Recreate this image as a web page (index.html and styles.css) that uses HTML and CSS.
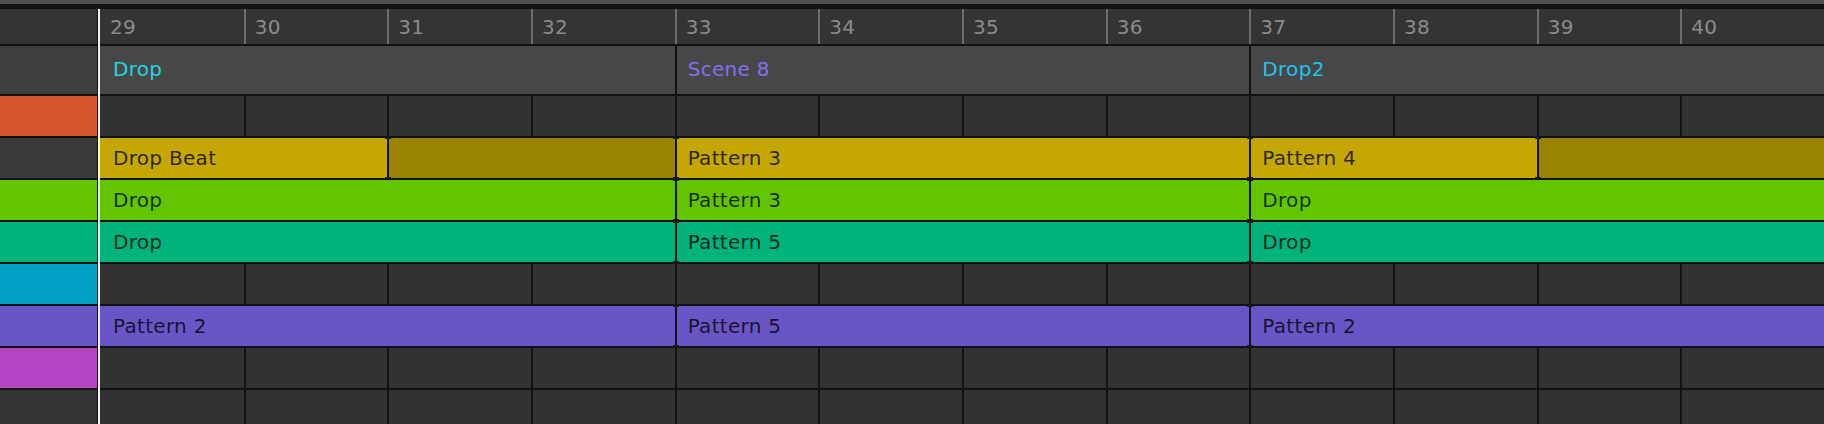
FILE: index.html
```html
<!DOCTYPE html>
<html lang="en">
<head>
    <meta charset="UTF-8">
    <title>Arranger</title>
    <link rel="stylesheet" href="styles.css">
</head>
<body>
    <div class="topbar"></div>
    <div class="arranger">
        <div class="heads">
            <div class="head ruler-head"></div>
            <div class="head scene-head"></div>
            <div class="head track orange"></div>
            <div class="head track gray"></div>
            <div class="head track green"></div>
            <div class="head track teal"></div>
            <div class="head track cyan"></div>
            <div class="head track purple"></div>
            <div class="head track magenta"></div>
            <div class="head track dark"></div>
        </div>

        <div class="lanes">
            <div class="ruler">
                <div class="tick">29</div>
                <div class="tick">30</div>
                <div class="tick">31</div>
                <div class="tick">32</div>
                <div class="tick">33</div>
                <div class="tick">34</div>
                <div class="tick">35</div>
                <div class="tick">36</div>
                <div class="tick">37</div>
                <div class="tick">38</div>
                <div class="tick">39</div>
                <div class="tick">40</div>
            </div>

            <div class="scenes">
                <div class="scene drop">Drop</div>
                <div class="scene scene8">Scene 8</div>
                <div class="scene drop2">Drop2</div>
            </div>

            <!-- track 1 -->
            <div class="lane empty">
                <div></div><div></div><div></div><div></div>
                <div></div><div></div><div></div><div></div>
                <div></div><div></div><div></div><div></div>
            </div>

            <!-- track 2 -->
            <div class="lane">
                <div class="clip yellow half">Drop Beat</div>
                <div class="clip yellow-loop half"></div>
                <div class="clip yellow">Pattern 3</div>
                <div class="clip yellow half">Pattern 4</div>
                <div class="clip yellow-loop half"></div>
            </div>

            <!-- track 3 -->
            <div class="lane">
                <div class="clip green">Drop</div>
                <div class="clip green">Pattern 3</div>
                <div class="clip green">Drop</div>
            </div>

            <!-- track 4 -->
            <div class="lane">
                <div class="clip teal">Drop</div>
                <div class="clip teal">Pattern 5</div>
                <div class="clip teal">Drop</div>
            </div>

            <!-- track 5 -->
            <div class="lane empty">
                <div></div><div></div><div></div><div></div>
                <div></div><div></div><div></div><div></div>
                <div></div><div></div><div></div><div></div>
            </div>

            <!-- track 6 -->
            <div class="lane">
                <div class="clip purple">Pattern 2</div>
                <div class="clip purple">Pattern 5</div>
                <div class="clip purple">Pattern 2</div>
            </div>

            <!-- track 7 -->
            <div class="lane empty">
                <div></div><div></div><div></div><div></div>
                <div></div><div></div><div></div><div></div>
                <div></div><div></div><div></div><div></div>
            </div>

            <!-- track 8 -->
            <div class="lane empty">
                <div></div><div></div><div></div><div></div>
                <div></div><div></div><div></div><div></div>
                <div></div><div></div><div></div><div></div>
            </div>
        </div>
    </div>
</body>
</html>
```

FILE: styles.css
```css
body {
    margin: 0;
    background: #121212;
    font-family: "DejaVu Sans", sans-serif;
    font-size: 20px;
    letter-spacing: 0.3px;
    height: 424px;
    overflow: hidden;
}

.topbar {
    height: 4px;
    background: #505050;
    margin-bottom: 5px;
}

.arranger {
    display: flex;
}

/* left track colour column */
.heads {
    width: 97px;
    padding-right: 1px;
    border-right: 2px solid #f2f2f2;
    display: flex;
    flex-direction: column;
    gap: 2px;
}

.head {
    height: 40px;
}

.ruler-head {
    height: 35px;
    background: #343434;
}

.scene-head {
    height: 48px;
    background: #3e3e3e;
}

.orange  { background: #d3552c; }
.gray    { background: #3a3a3a; }
.green   { background: #63c400; }
.teal    { background: #00b27b; }
.cyan    { background: #00a1c7; }
.purple  { background: #6a55c7; }
.magenta { background: #b444c4; }
.dark    { background: #333333; }

/* timeline */
.lanes {
    flex: 1;
    display: flex;
    flex-direction: column;
    gap: 2px;
}

.ruler,
.scenes,
.lane {
    display: grid;
    grid-template-columns: repeat(12, 1fr);
}

.ruler {
    height: 35px;
    background: #343434;
}

.tick {
    box-sizing: border-box;
    border-left: 2px solid #6c6c6c;
    padding-left: 9px;
    display: flex;
    align-items: center;
    color: #8b8b8b;
}

.tick:first-child {
    border-left: none;
    padding-left: 10px;
}

.scenes {
    height: 48px;
    background: #474747;
}

.scene {
    grid-column: span 4;
    box-sizing: border-box;
    border-left: 2px solid #121212;
    padding: 0 0 2px 11px;
    display: flex;
    align-items: center;
}

.scene:first-child {
    border-left: none;
    padding-left: 13px;
}

.drop   { color: #1ed6e2; }
.scene8 { color: #8470ee; }
.drop2  { color: #1fc2f0; }

.lane {
    height: 40px;
}

.lane.empty div {
    background: #323232;
    border-left: 2px solid #121212;
}

.lane.empty div:first-child {
    border-left: none;
}

.clip {
    grid-column: span 4;
    position: relative;
    box-sizing: border-box;
    border-left: 2px solid #121212;
    padding-left: 11px;
    display: flex;
    align-items: center;
    color: rgba(0, 0, 0, 0.78);
    white-space: nowrap;
}

/* little nubs where clip edges meet the row lines */
.clip::before,
.clip::after {
    content: "";
    position: absolute;
    left: -4px;
    width: 6px;
    height: 2px;
    background: #1a1a1a;
}

.clip::before { top: -1px; }
.clip::after  { bottom: -1px; }

.clip:first-child {
    border-left: none;
    padding-left: 13px;
}

.clip:first-child::before,
.clip:first-child::after {
    display: none;
}

.clip.half {
    grid-column: span 2;
}

.clip.yellow      { background: #c4a700; }
.clip.yellow-loop { background: #9a8300; }
.clip.green       { background: #63c400; }
.clip.teal        { background: #00b27b; }
.clip.purple      { background: #6a55c7; }
```
